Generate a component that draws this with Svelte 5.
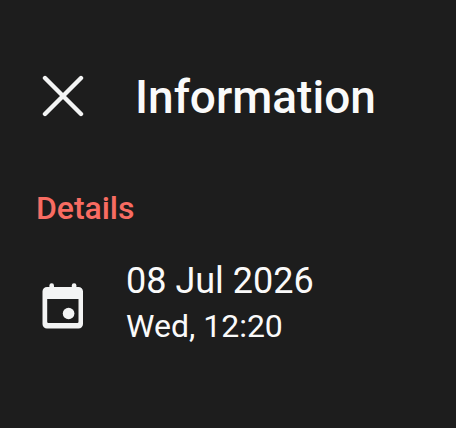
<script lang="ts">
    let date = '08 Jul 2026'
    let time = 'Wed, 12:20'
</script>

<main>
    <header>
        <button class="close" aria-label="Close">
            <svg viewBox="0 0 42 42" width="42" height="42">
                <path d="M3 3L39 39M39 3L3 39" />
            </svg>
        </button>
        <h1>Information</h1>
    </header>

    <section>
        <h2>Details</h2>
        <div class="row">
            <svg class="calendar" viewBox="0 0 42 47" width="42" height="47">
                <rect x="7.4" y="1.2" width="4.6" height="8" rx="2.2" />
                <rect x="29.8" y="1.2" width="4.6" height="8" rx="2.2" />
                <path fill-rule="evenodd" d="M5 5h31.5a4.5 4.5 0 0 1 4.5 4.5v32.5a4.5 4.5 0 0 1-4.5 4.5h-31.5a4.5 4.5 0 0 1-4.5-4.5v-32.5a4.5 4.5 0 0 1 4.5-4.5zM5.2 17v22.8q0 1.2 1.2 1.2h28.9q1.2 0 1.2-1.2V17z" />
                <circle cx="26.6" cy="31.5" r="5.8" />
            </svg>
            <div class="text">
                <div class="date">{date}</div>
                <div class="time">{time}</div>
            </div>
        </div>
    </section>
</main>

<style>
    :global(body) {
        margin: 0;
        background-color: #1d1d1d;
    }

    main {
        box-sizing: border-box;
        height: 428px;
        padding: 68px 36px 0;
        font-family: Roboto, sans-serif;
        color: #fafafa;
        background-color: #1d1d1d;
    }

    header {
        display: flex;
        align-items: center;
        height: 56px;
        padding-left: 6px;
    }

    .close {
        display: flex;
        padding: 0;
        border: none;
        background: none;
    }

    .close path {
        fill: none;
        stroke: #f3f4f4;
        stroke-width: 4.4;
        stroke-linecap: round;
    }

    h1 {
        margin: 2px 0 0 51px;
        font-size: 46px;
        font-weight: 500;
        line-height: 56px;
    }

    h2 {
        margin: 64px 0 0;
        font-size: 32px;
        font-weight: 500;
        line-height: 40px;
        letter-spacing: -0.05px;
        color: #f86c62;
    }

    .row {
        display: flex;
        margin-top: 30px;
        padding-left: 6px;
    }

    .calendar {
        margin-top: 24px;
        fill: #f3f4f4;
    }

    .text {
        margin-left: 42px;
    }

    .date {
        font-size: 36px;
        line-height: 46px;
    }

    .time {
        font-size: 32px;
        line-height: 44px;
    }
</style>
